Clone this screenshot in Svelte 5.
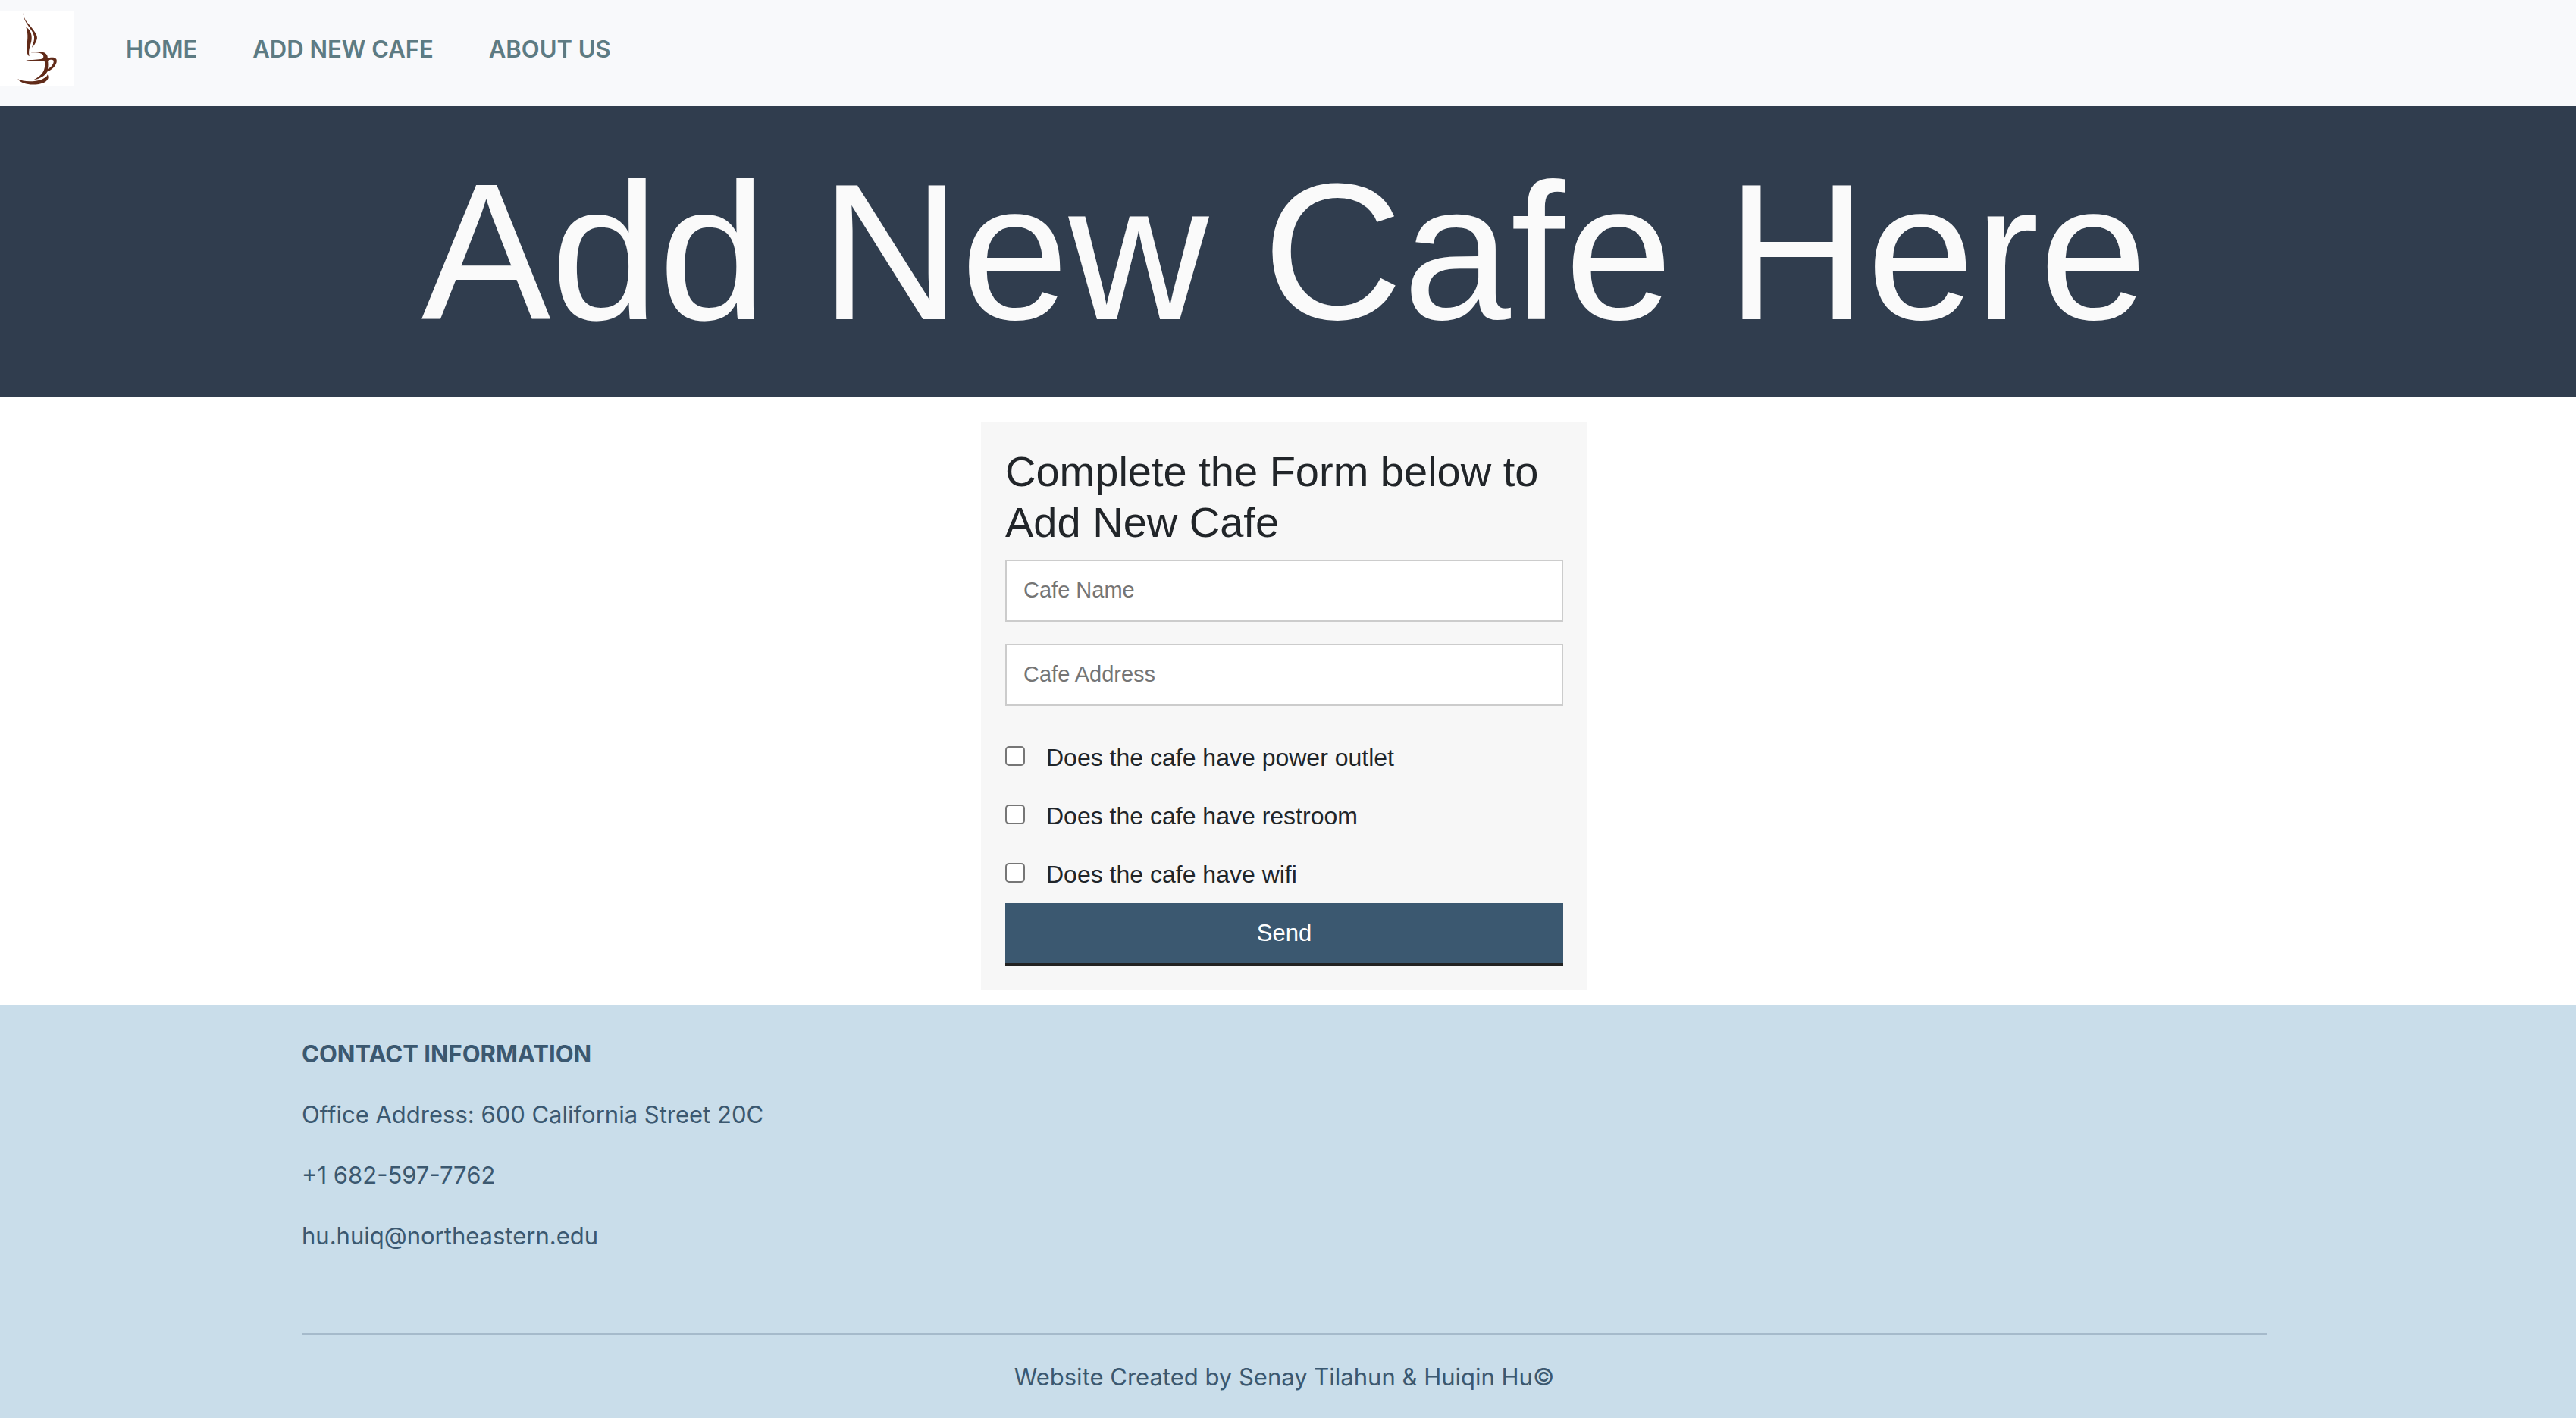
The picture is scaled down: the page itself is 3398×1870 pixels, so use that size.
<script>
  const links = ['HOME', 'ADD NEW CAFE', 'ABOUT US'];
  const fields = [
    { id: 'cafe-name', label: 'Cafe Name' },
    { id: 'cafe-address', label: 'Cafe Address' },
  ];
  const options = [
    { id: 'outlet', label: 'Does the cafe have power outlet' },
    { id: 'restroom', label: 'Does the cafe have restroom' },
    { id: 'wifi', label: 'Does the cafe have wifi' },
  ];
</script>

<header class="navbar">
  <a class="brand" href="#home" aria-label="Cafe home">
    <svg class="logo" viewBox="0 42 294 300" aria-hidden="true">
      <rect y="42" width="294" height="300" fill="#fff" />
      <g fill="#602a18">
        <path d="M92 50 C95 80 108 86 124 108 C143 132 152 146 144 161 C139 173 134 181 126 188 C131 174 137 158 135 145 C131 122 111 105 101 85 C95 73 92 62 92 50Z" />
        <path d="M103 108 C119 115 127 135 125 155 C123 177 110 192 116 223 C107 217 105 202 106 188 C107 166 114 137 103 108Z" />
        <path d="M122 208 C145 202 171 203 182 213 C188 219 189 225 188 231 C198 227 216 225 223 234 C230 248 212 275 188 283 C179 300 157 313 133 316 C153 306 170 292 175 274 C179 261 179 251 176 242 C153 243 122 245 103 239 C126 236 150 238 169 232 C174 225 173 218 165 213 C153 207 137 208 122 208Z" />
        <path d="M70 313 C95 325 137 324 163 315 C180 309 187 302 188 295 C195 307 190 319 175 326 C141 341 89 337 70 313Z" />
      </g>
      <path d="M189 240 C200 235 210 235 212 241 C214 252 202 267 189 273 C191 261 191 250 189 240Z" fill="#fff" />
    </svg>
  </a>
  <nav class="links">
    {#each links as link}
      <a href="#{link.toLowerCase().replaceAll(' ', '-')}">{link}</a>
    {/each}
  </nav>
</header>

<main>
  <h1>Add New Cafe Here</h1>
  <section class="form-area">
    <form class="card" onsubmit={(e) => e.preventDefault()}>
      <h2>Complete the Form below to Add New Cafe</h2>
      <div class="fields">
        {#each fields as field}
          <input class="field" type="text" id={field.id} placeholder={field.label} aria-label={field.label} />
        {/each}
      </div>
      <div class="options">
        {#each options as option}
          <div class="option">
            <input type="checkbox" id={option.id} />
            <label for={option.id}>{option.label}</label>
          </div>
        {/each}
      </div>
      <button type="submit">Send</button>
    </form>
  </section>
</main>

<footer>
  <div class="container">
    <h3>CONTACT INFORMATION</h3>
    <p>Office Address: 600 California Street 20C</p>
    <p>+1 682-597-7762</p>
    <p>hu.huiq@northeastern.edu</p>
    <hr />
    <p class="credit">Website Created by Senay Tilahun &amp; Huiqin Hu©</p>
  </div>
</footer>

<style>
  :global(body) {
    margin: 0;
    background: #fff;
    color: #212529;
  }
  :global(#app) {
    display: flex;
    flex-direction: column;
    min-height: 100vh;
  }
  .navbar {
    display: flex;
    align-items: center;
    gap: 68px;
    padding: 14px 0 26px;
    background: #f8f9fb;
    font-family: Inter, sans-serif;
  }
  .logo {
    display: block;
    width: 98px;
    height: 100px;
  }
  .links {
    display: flex;
    gap: 73px;
    padding-top: 2px;
  }
  .links a {
    color: #5d7b83;
    font-size: 31px;
    font-weight: 600;
    line-height: 48px;
    text-decoration: none;
  }
  h1 {
    margin: 0;
    padding-right: 10px;
    background: #303d4e;
    color: #fafafa;
    font: 400 256px/384px "Liberation Sans", Arial, sans-serif;
    text-align: center;
  }
  main {
    font-family: "Liberation Sans", Arial, sans-serif;
  }
  .form-area {
    padding: 32px 10px 20px 0;
  }
  .card {
    box-sizing: border-box;
    max-width: 800px;
    margin: 0 auto;
    padding: 32px;
    background: #f7f7f7;
  }
  h2 {
    margin: 0 0 16px;
    font-size: 56px;
    font-weight: 400;
    line-height: 67px;
  }
  .fields {
    display: grid;
    gap: 29px;
  }
  .field {
    box-sizing: border-box;
    width: 100%;
    height: 82px;
    padding: 0 22px 2px;
    border: 2px solid #ccc;
    border-radius: 0;
    background: #fff;
    font: 29px "Liberation Sans", Arial, sans-serif;
  }
  .field::placeholder {
    color: #757575;
  }
  .options {
    display: grid;
    gap: 29px;
    padding: 44px 0 14px;
  }
  .option {
    display: flex;
    align-items: center;
    gap: 28px;
    font-size: 32px;
    line-height: 48px;
  }
  .option input {
    appearance: none;
    box-sizing: border-box;
    width: 26px;
    height: 26px;
    margin: 0 0 4px;
    border: 2px solid #767676;
    border-radius: 5px;
    background: #fff;
  }
  .option input:checked {
    background: #3b5870;
  }
  button {
    display: block;
    width: 100%;
    height: 83px;
    padding: 0;
    border: 0;
    border-bottom: 4px solid #222;
    background: #3b5870;
    color: #fff;
    font: 31px "Liberation Sans", Arial, sans-serif;
    cursor: pointer;
  }
  footer {
    flex: 1;
    padding: 40px 408px 0 398px;
    background: #c9ddea;
    color: #3b5870;
    font: 31px/48px Inter, sans-serif;
  }
  h3,
  p {
    margin: 0 0 32px;
    font-size: 31px;
  }
  h3 {
    font-weight: 700;
  }
  hr {
    margin: 104px 0 32px;
    border: 0;
    border-top: 2px solid #a5bacb;
  }
  .credit {
    margin: 0;
    text-align: center;
  }
</style>
